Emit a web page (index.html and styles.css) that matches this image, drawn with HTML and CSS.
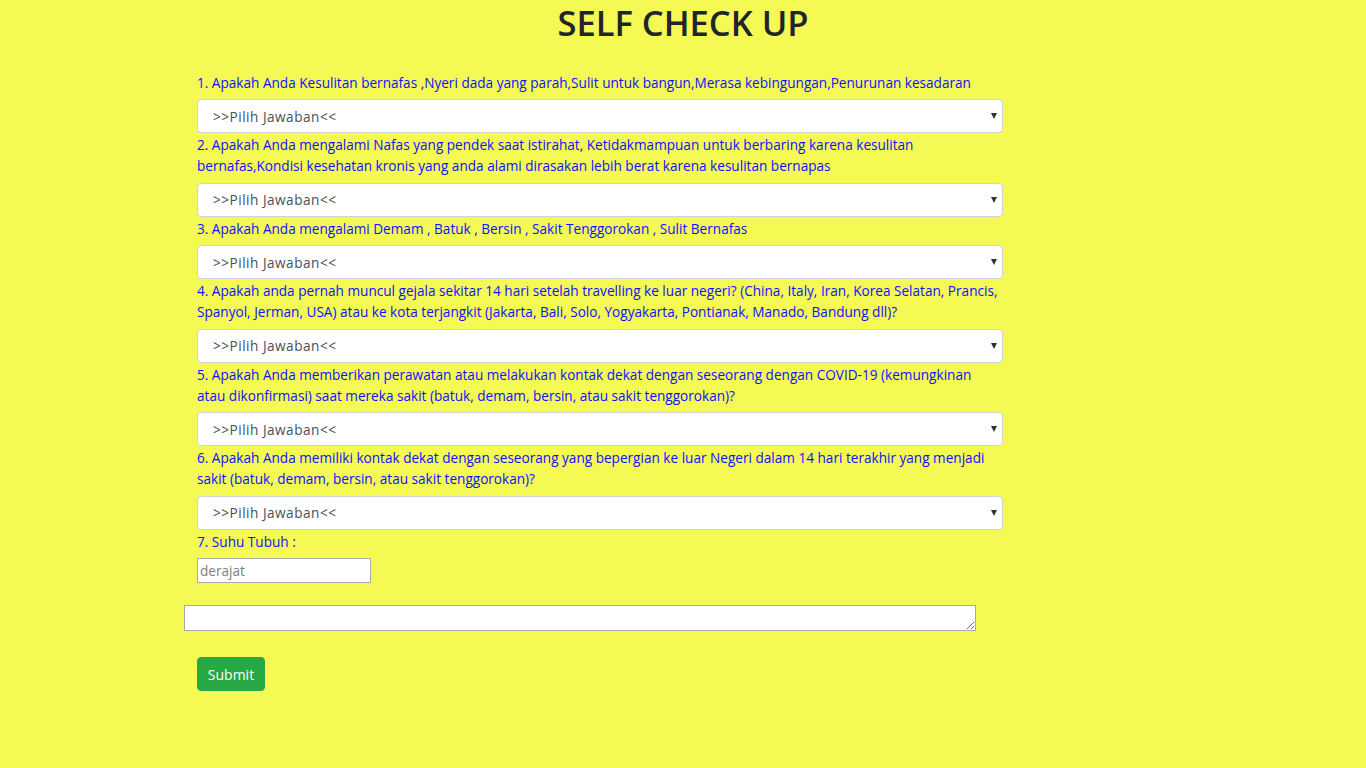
FILE: index.html
```html
<!DOCTYPE html>
<html lang="id">
<head>
<meta charset="utf-8">
<title>Self Check Up</title>
<link rel="stylesheet" href="styles.css">
</head>
<body>
<h1 class="title">SELF CHECK UP</h1>
<form class="form">
  <div class="group">
    <label class="q">1. Apakah Anda Kesulitan bernafas ,Nyeri dada yang parah,Sulit untuk bangun,Merasa kebingungan,Penurunan kesadaran</label>
    <div class="select-wrap"><select class="select"><option>&gt;&gt;Pilih Jawaban&lt;&lt;</option></select></div>
  </div>
  <div class="group">
    <label class="q">2. Apakah Anda mengalami Nafas yang pendek saat istirahat, Ketidakmampuan untuk berbaring karena kesulitan bernafas,Kondisi kesehatan kronis yang anda alami dirasakan lebih berat karena kesulitan bernapas</label>
    <div class="select-wrap"><select class="select"><option>&gt;&gt;Pilih Jawaban&lt;&lt;</option></select></div>
  </div>
  <div class="group">
    <label class="q">3. Apakah Anda mengalami Demam , Batuk , Bersin , Sakit Tenggorokan , Sulit Bernafas</label>
    <div class="select-wrap"><select class="select"><option>&gt;&gt;Pilih Jawaban&lt;&lt;</option></select></div>
  </div>
  <div class="group">
    <label class="q">4. Apakah anda pernah muncul gejala sekitar 14 hari setelah travelling ke luar negeri? (China, Italy, Iran, Korea Selatan, Prancis, Spanyol, Jerman, USA) atau ke kota terjangkit (Jakarta, Bali, Solo, Yogyakarta, Pontianak, Manado, Bandung dll)?</label>
    <div class="select-wrap"><select class="select"><option>&gt;&gt;Pilih Jawaban&lt;&lt;</option></select></div>
  </div>
  <div class="group">
    <label class="q">5. Apakah Anda memberikan perawatan atau melakukan kontak dekat dengan seseorang dengan COVID-19 (kemungkinan atau dikonfirmasi) saat mereka sakit (batuk, demam, bersin, atau sakit tenggorokan)?</label>
    <div class="select-wrap"><select class="select"><option>&gt;&gt;Pilih Jawaban&lt;&lt;</option></select></div>
  </div>
  <div class="group">
    <label class="q">6. Apakah Anda memiliki kontak dekat dengan seseorang yang bepergian ke luar Negeri dalam 14 hari terakhir yang menjadi sakit (batuk, demam, bersin, atau sakit tenggorokan)?</label>
    <div class="select-wrap"><select class="select"><option>&gt;&gt;Pilih Jawaban&lt;&lt;</option></select></div>
  </div>
  <div class="group">
    <label class="q">7. Suhu Tubuh :</label>
    <input class="temp" type="text" placeholder="derajat">
  </div>
  <textarea class="notes"></textarea>
  <button class="submit" type="button">Submit</button>
</form>
</body>
</html>
```
FILE: styles.css
```css
html, body {
  margin: 0;
  padding: 0;
}
body {
  background: #f4f954;
  font-family: "Open Sans", "Noto Sans", sans-serif;
  color: #212529;
  min-height: 768px;
}
.title {
  margin: 0;
  text-align: center;
  font-size: 34.5px;
  font-weight: 600;
  line-height: 46px;
  color: #212529;
}
.form {
  width: 806px;
  margin: 24.5px 0 0 197px;
  display: flex;
  flex-direction: column;
}
.group {
  display: flex;
  flex-direction: column;
}
.q {
  display: block;
  color: #1010ff;
  font-size: 13.6px;
  line-height: 21px;
  margin: 1px 0 6.5px;
}
.select-wrap {
  position: relative;
}
.select-wrap::after {
  content: "";
  position: absolute;
  right: 6px;
  top: 14px;
  border-left: 3.5px solid transparent;
  border-right: 3.5px solid transparent;
  border-top: 6px solid #333;
  pointer-events: none;
}
.select {
  -webkit-appearance: none;
  appearance: none;
  width: 100%;
  height: 34px;
  box-sizing: border-box;
  border: 1px solid #ced4da;
  border-radius: 4px;
  background: #fff;
  color: #495057;
  font-family: inherit;
  font-size: 13.6px;
  letter-spacing: 0.5px;
  padding: 0 12px 0 15px;
  margin: 0;
}
.temp {
  width: 174px;
  height: 25px;
  box-sizing: border-box;
  border: 1px solid #a9a9a9;
  font-family: inherit;
  font-size: 13.6px;
  padding: 0 2px;
  margin: 0;
}
.temp::placeholder {
  color: #808080;
}
.notes {
  width: 792px;
  height: 26px;
  box-sizing: border-box;
  margin: 22px 0 0 -13px;
  border: 1px solid #a9a9a9;
  resize: both;
  font-family: inherit;
}
.submit {
  align-self: flex-start;
  margin-top: 26px;
  width: 68px;
  height: 34px;
  background: #28a745;
  color: #fff;
  border: 1px solid #28a745;
  border-radius: 4px;
  font-family: inherit;
  font-size: 14px;
  padding: 0;
}
```
